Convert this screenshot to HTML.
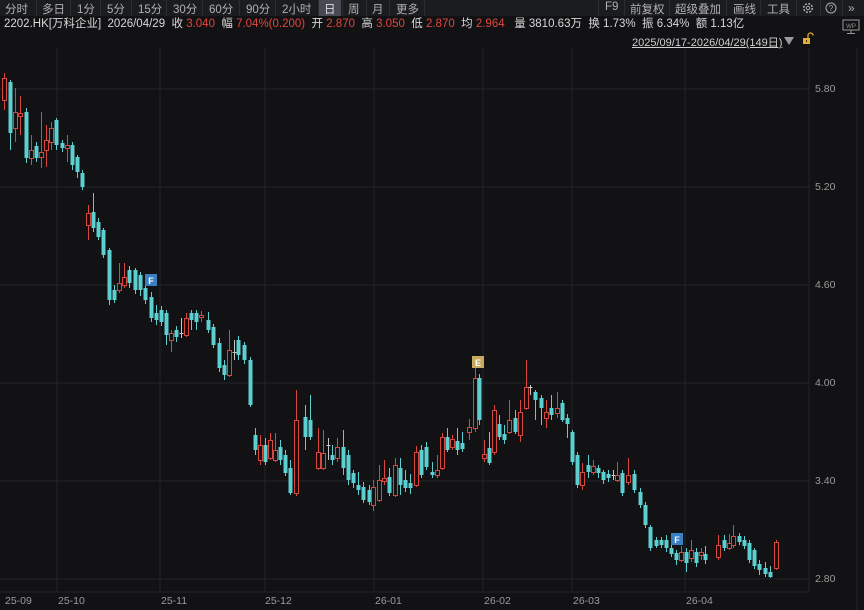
<!DOCTYPE html>
<html><head><meta charset="utf-8">
<style>
*{margin:0;padding:0;box-sizing:border-box}
body{width:864px;height:610px;background:#121215;overflow:hidden;font-family:"Liberation Sans","Noto Sans CJK SC",sans-serif;color:#c8c8c8;position:relative}
.tb{position:absolute;left:0;top:0;width:864px;height:16px;background:#1b1c1f;font-size:11.5px;color:#b0b0b0}
.tb span{position:absolute;top:1px}
.sep{position:absolute;top:0;width:1px;height:16px;background:#2c2d31}
.info{position:absolute;top:15px;left:4px;font-size:11.5px;white-space:nowrap;color:#d8d8d8}
.r{color:#e0453a}
.lbl{position:absolute;font-size:10.5px;color:#9a9a9a}
</style></head><body>
<div class="tb">
<span style="left:5px">分时</span><span style="left:42px">多日</span><span style="left:77px">1分</span><span style="left:107px">5分</span><span style="left:138px">15分</span><span style="left:173px">30分</span><span style="left:209px">60分</span><span style="left:246px">90分</span><span style="left:282px">2小时</span>
<div style="position:absolute;left:319px;top:0;width:22px;height:16px;background:#474a52"></div>
<span style="left:324px;color:#ddd">日</span><span style="left:348px">周</span><span style="left:372px">月</span><span style="left:396px">更多</span>
<div class="sep" style="left:36px"></div><div class="sep" style="left:70px"></div><div class="sep" style="left:100px"></div><div class="sep" style="left:131px"></div><div class="sep" style="left:166px"></div><div class="sep" style="left:202px"></div><div class="sep" style="left:239px"></div><div class="sep" style="left:275px"></div><div class="sep" style="left:318px"></div><div class="sep" style="left:342px"></div><div class="sep" style="left:366px"></div><div class="sep" style="left:389px"></div><div class="sep" style="left:424px"></div>
<div class="sep" style="left:598px"></div><div class="sep" style="left:624px"></div><div class="sep" style="left:669px"></div><div class="sep" style="left:726px"></div><div class="sep" style="left:760px"></div><div class="sep" style="left:796px"></div><div class="sep" style="left:820px"></div><div class="sep" style="left:842px"></div>
<span style="left:605px">F9</span><span style="left:630px">前复权</span><span style="left:675px">超级叠加</span><span style="left:733px">画线</span><span style="left:767px">工具</span>
<svg style="position:absolute;left:802px;top:2px" width="12" height="12" viewBox="0 0 12 12"><circle cx="6" cy="6" r="4.3" fill="none" stroke="#aaa" stroke-width="1.6" stroke-dasharray="2 1.4"/><circle cx="6" cy="6" r="1.7" fill="none" stroke="#aaa" stroke-width="1"/></svg>
<svg style="position:absolute;left:825px;top:2px" width="12" height="12" viewBox="0 0 12 12"><circle cx="6" cy="6" r="5" fill="none" stroke="#aaa" stroke-width="1"/><text x="6" y="9" font-size="8" text-anchor="middle" fill="#aaa" font-family="Liberation Sans">?</text></svg>
<span style="left:848px;font-size:12px">»</span>
</div>
<div class="info">2202.HK[万科企业] &nbsp;2026/04/29 &nbsp;收 <span class="r">3.040</span> &nbsp;幅 <span class="r">7.04%(0.200)</span> &nbsp;开 <span class="r">2.870</span> &nbsp;高 <span class="r">3.050</span> &nbsp;低 <span class="r">2.870</span> &nbsp;均 <span class="r">2.964</span> &nbsp;&nbsp;量 3810.63万 &nbsp;换 1.73% &nbsp;振 6.34% &nbsp;额 1.13亿</div>
<div style="position:absolute;left:632px;top:34px;font-size:11px;color:#d0d0d0;text-decoration:underline;white-space:nowrap">2025/09/17-2026/04/29(149日)</div>
<svg style="position:absolute;left:783px;top:36px" width="12" height="10"><polygon points="1,1 11,1 6,9" fill="#9a9a9a"/></svg>
<svg style="position:absolute;left:801px;top:32px" width="14" height="14"><path d="M7 6 V3.5 a2.5 2.5 0 0 1 5 0" fill="none" stroke="#e0b030" stroke-width="1.3"/><rect x="2" y="6" width="7" height="6" fill="#e0b030"/><rect x="5" y="8" width="1" height="2" fill="#332"/></svg>
<svg style="position:absolute;left:842px;top:19px" width="18" height="16"><rect x="1" y="1" width="16" height="10" fill="none" stroke="#999" stroke-width="1"/><text x="9" y="9" font-size="6" text-anchor="middle" fill="#999" font-family="Liberation Sans">WP</text><path d="M9 11V14M5 14.5H13" stroke="#999"/></svg>

<svg id="ch" style="position:absolute;left:0;top:0" width="864" height="610">
<g stroke="#232428" stroke-width="1">
<line x1="0" y1="89" x2="809" y2="89"/><line x1="0" y1="187" x2="809" y2="187"/><line x1="0" y1="285" x2="809" y2="285"/><line x1="0" y1="383" x2="809" y2="383"/><line x1="0" y1="481" x2="809" y2="481"/><line x1="0" y1="579" x2="809" y2="579"/>
<line x1="57" y1="48" x2="57" y2="592"/><line x1="160" y1="48" x2="160" y2="592"/><line x1="265" y1="48" x2="265" y2="592"/><line x1="374" y1="48" x2="374" y2="592"/><line x1="483" y1="48" x2="483" y2="592"/><line x1="572" y1="48" x2="572" y2="592"/><line x1="685" y1="48" x2="685" y2="592"/>
<line x1="809" y1="48" x2="809" y2="592"/><line x1="0" y1="592" x2="809" y2="592"/><line x1="857" y1="48" x2="857" y2="610"/>
</g>
<g id="cd"></g>
<rect x="145" y="274" width="12" height="12" fill="#3a7fc4"/><text x="151" y="284" font-size="9" fill="#fff" text-anchor="middle" font-family="Liberation Sans" font-weight="bold">F</text>
<rect x="472" y="356" width="12" height="12" fill="#c9a95c"/><text x="478" y="366" font-size="9" fill="#fff" text-anchor="middle" font-family="Liberation Sans" font-weight="bold">E</text>
<rect x="671" y="533" width="12" height="12" fill="#3a7fc4"/><text x="677" y="543" font-size="9" fill="#fff" text-anchor="middle" font-family="Liberation Sans" font-weight="bold">F</text>
</svg>
<div class="lbl" style="left:815px;top:83px">5.80</div><div class="lbl" style="left:815px;top:181px">5.20</div><div class="lbl" style="left:815px;top:279px">4.60</div><div class="lbl" style="left:815px;top:377px">4.00</div><div class="lbl" style="left:815px;top:475px">3.40</div><div class="lbl" style="left:815px;top:573px">2.80</div>
<div class="lbl" style="left:5px;top:595px">25-09</div><div class="lbl" style="left:58px;top:595px">25-10</div><div class="lbl" style="left:161px;top:595px">25-11</div><div class="lbl" style="left:265px;top:595px">25-12</div><div class="lbl" style="left:375px;top:595px">26-01</div><div class="lbl" style="left:484px;top:595px">26-02</div><div class="lbl" style="left:573px;top:595px">26-03</div><div class="lbl" style="left:686px;top:595px">26-04</div>
<script>
var D=[
[4,78,100,'r',73,110],[10,82,133,'c',80,150],[15,112,128,'r',88,142],[20,113,116,'r',96,135],[26,112,158,'c',108,163],[31,150,158,'r',135,165],[36,146,158,'c',142,162],[41,152,157,'r',112,168],[46,140,150,'r',125,167],[51,128,142,'r',122,150],[56,120,145,'c',118,150],[62,143,148,'c',140,152],[67,145,148,'r',135,162],[72,145,165,'c',142,170],[77,157,172,'c',155,178],[82,173,187,'c',170,190],
[88,213,225,'r',205,240],[93,212,228,'c',193,232],[98,222,237,'c',218,240],[103,230,255,'c',228,258],[109,250,300,'c',248,305],[114,290,300,'c',285,303],[119,283,290,'r',263,293],[124,277,285,'r',263,288],[129,270,283,'c',266,288],[135,270,290,'c',268,294],[140,275,290,'c',272,296],[145,288,300,'c',285,304],
[151,297,318,'c',292,322],[156,313,320,'c',305,325],[161,310,322,'c',306,326],[166,313,335,'c',310,345],[171,333,340,'r',330,352],[176,330,337,'c',326,342],[181,333,334,'g',318,338],[186,318,335,'r',313,337],[191,313,320,'c',310,330],[196,313,322,'c',310,330],[201,315,317,'r',311,322],[208,320,330,'c',312,333],[213,327,345,'c',324,348],[219,343,368,'c',338,372],[224,365,375,'c',360,380],[229,350,375,'r',330,377],[234,352,353,'g',340,360],[238,340,355,'c',336,360],[244,345,360,'c',342,364],[250,360,405,'c',357,407],
[255,435,450,'c',428,455],[260,445,460,'r',435,465],[265,445,462,'c',438,465],[270,440,458,'r',433,460],[275,450,460,'r',433,462],[280,447,460,'c',440,465],[285,455,473,'c',450,476],[290,468,493,'c',460,495],[296,420,493,'r',390,496],[305,417,437,'c',405,450],[310,420,437,'c',395,440],[318,452,468,'r',428,470],[323,453,468,'r',430,470],[328,445,446,'g',438,460],[332,455,460,'c',445,465],[337,447,458,'r',438,462],[343,447,468,'c',430,475],[348,455,480,'c',450,485],[353,473,483,'c',470,488],[358,485,490,'c',472,495],[363,487,500,'c',482,503],[369,490,502,'c',485,505],[373,487,505,'r',480,511],[379,480,500,'r',465,502],[384,478,481,'r',460,485],[389,477,493,'c',468,496],[395,465,495,'r',458,497],[400,468,485,'c',458,495],[405,480,488,'c',470,492],[410,483,488,'c',474,494],[416,452,485,'r',446,487],
[421,450,475,'c',445,478],[426,447,467,'c',442,470],[432,472,475,'c',462,478],[437,470,475,'r',455,478],[442,437,468,'r',433,470],[447,437,450,'c',428,452],[452,439,447,'r',435,450],[457,441,450,'c',428,455],[462,443,449,'c',432,452],[469,427,432,'r',419,440],[475,378,428,'r',365,432],[479,378,420,'c',374,425],[484,454,458,'r',440,462],[489,448,463,'c',432,465],[494,410,452,'r',405,455],[499,424,437,'c',415,440],[504,434,440,'c',425,444],[509,420,432,'r',400,434],[515,418,432,'c',410,434],[520,412,435,'r',400,442],[526,387,408,'r',360,410],[530,387,388,'g',385,395],[535,392,400,'c',390,420],[541,398,408,'c',395,425],[546,412,418,'r',400,428],[551,408,415,'c',395,420],[557,408,413,'r',392,418],[562,403,420,'c',400,422],[567,418,424,'c',414,438],[572,432,462,'c',430,465],[577,455,485,'c',452,488],[582,472,485,'r',463,490],[588,465,472,'c',455,478],[593,466,472,'r',460,475],[598,468,473,'c',465,478],[603,472,480,'c',470,484],[608,474,478,'c',470,482],[613,475,476,'g',470,480],[617,475,480,'r',462,482],[622,473,493,'c',470,496],[628,475,482,'r',458,485],[634,474,490,'c',470,493],[640,492,505,'c',488,508],[645,505,525,'c',502,528],[650,527,548,'c',525,551],[656,540,546,'c',537,548],[661,540,545,'c',537,548],[666,540,548,'c',535,552],[671,548,554,'c',545,557],[676,553,560,'c',550,565],[681,552,560,'r',546,562],[686,552,563,'c',548,572],[691,550,558,'r',540,562],[696,552,563,'c',548,567],[701,552,555,'r',548,560],[705,554,560,'c',546,564],[718,545,557,'r',535,560],[724,540,548,'c',535,551],[729,543,548,'r',534,550],[733,536,545,'r',525,548],[739,536,542,'c',533,545],[744,540,546,'c',536,549],[749,543,560,'c',540,563],[754,550,566,'c',548,569],[759,564,570,'c',560,575],[765,568,574,'c',562,577],[770,572,577,'c',566,578],[776,542,568,'r',540,570]
];
var g=document.getElementById('cd'),s='';
D.forEach(function(d){var x=d[0],t=Math.min(d[1],d[2]),b=Math.max(d[1],d[2]);if(b-t<1)b=t+1;
var col=d[3]=='r'?'#d8473d':(d[3]=='g'?'#c8c8c8':'#5ccfd0');
s+='<line x1="'+(x+0.5)+'" x2="'+(x+0.5)+'" y1="'+d[4]+'" y2="'+d[5]+'" stroke="'+col+'" stroke-width="1"/>';
if(d[3]=='r')s+='<rect x="'+(x-1.5)+'" y="'+(t+0.5)+'" width="4" height="'+(b-t)+'" fill="#121215" stroke="'+col+'" stroke-width="1"/>';
else s+='<rect x="'+(x-1.5)+'" y="'+t+'" width="4" height="'+(b-t)+'" fill="'+col+'"/>';});
g.innerHTML=s;
</script>
</body></html>
